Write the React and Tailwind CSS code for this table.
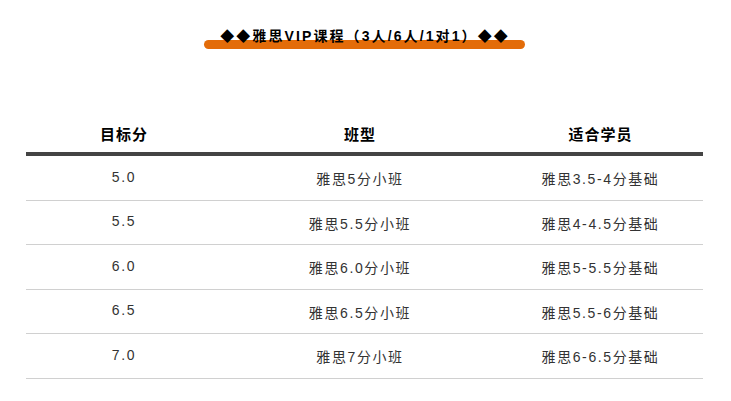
import React from 'react';

const rows = [
  { score: '5.0', cls: '雅思5分小班', fit: '雅思3.5-4分基础' },
  { score: '5.5', cls: '雅思5.5分小班', fit: '雅思4-4.5分基础' },
  { score: '6.0', cls: '雅思6.0分小班', fit: '雅思5-5.5分基础' },
  { score: '6.5', cls: '雅思6.5分小班', fit: '雅思5.5-6分基础' },
  { score: '7.0', cls: '雅思7分小班', fit: '雅思6-6.5分基础' },
];

const font = { fontFamily: '"Liberation Sans", "Noto Sans CJK SC", sans-serif' };

export default function App() {
  return (
    <div className="w-[731px] h-[401px] bg-white overflow-hidden" style={font}>
      {/* Title */}
      <div className="pt-[28px] flex justify-center">
        <div className="relative w-[321px] h-[21px] ml-[-3px]">
          <div className="absolute left-0 right-0 bottom-0 h-[9px] rounded-full bg-[#e36c09]" />
          <p className="relative text-center text-[14px] leading-[17px] font-bold text-black tracking-[2.1px] pl-[2px]">
            ◆◆雅思VIP课程（3人/6人/1对1）◆◆
          </p>
        </div>
      </div>

      {/* Table */}
      <div className="mt-[71px] mx-[26px] w-[677px]">
        <div className="grid grid-cols-[196px_276px_205px] h-[36px] items-center border-b-4 border-[#444] text-[15px] font-bold text-black tracking-[1px]">
          <div className="text-center pb-[1px]">目标分</div>
          <div className="text-center pb-[1px]">班型</div>
          <div className="text-center pb-[1px]">适合学员</div>
        </div>
        {rows.map((r) => (
          <div
            key={r.score}
            className="grid grid-cols-[196px_276px_205px] h-[44.5px] items-center border-b border-[#d0d0d0] text-[14px] text-[#333] tracking-[1.6px]"
          >
            <div className="text-center pb-[1px]">{r.score}</div>
            <div className="text-center pt-[4px]">{r.cls}</div>
            <div className="text-center pt-[4px]">{r.fit}</div>
          </div>
        ))}
      </div>
    </div>
  );
}
